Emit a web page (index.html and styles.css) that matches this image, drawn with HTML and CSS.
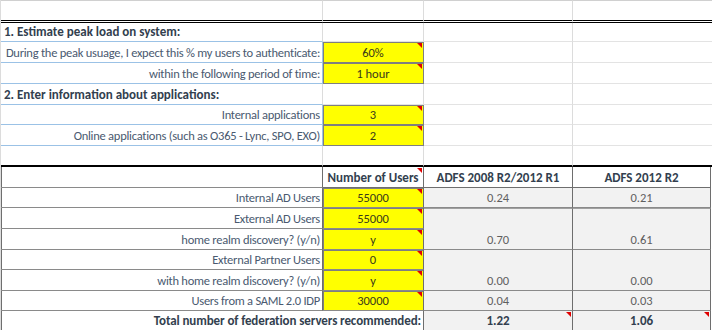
FILE: index.html
```html
<!DOCTYPE html>
<html lang="en">
<head>
  <meta charset="UTF-8">
  <title>ADFS Capacity Planning</title>
  <link rel="stylesheet" href="styles.css">
</head>
<body>
  <div class="sheet">
    <!-- row 0 -->
    <div class="c top dbl"></div>
    <div class="c top dbl"></div>
    <div class="c top dbl"></div>
    <div class="c top dbl"></div>

    <!-- section 1 -->
    <div class="c head blue-b">1. Estimate peak load on system:</div>
    <div class="c"></div>
    <div class="c"></div>
    <div class="c"></div>

    <div class="c lbl r blue">During the peak usuage, I expect this % my users to authenticate:</div>
    <div class="c in tri">60%</div>
    <div class="c"></div>
    <div class="c"></div>

    <div class="c lbl r blue">within the following period of time:</div>
    <div class="c in tri">1 hour</div>
    <div class="c"></div>
    <div class="c"></div>

    <!-- section 2 -->
    <div class="c head blue-b">2. Enter information about applications:</div>
    <div class="c"></div>
    <div class="c"></div>
    <div class="c"></div>

    <div class="c lbl r blue">Internal applications</div>
    <div class="c in tri">3</div>
    <div class="c"></div>
    <div class="c"></div>

    <div class="c lbl r blue">Online applications (such as O365 - Lync, SPO, EXO)</div>
    <div class="c in tri">2</div>
    <div class="c"></div>
    <div class="c"></div>

    <div class="c thick"></div>
    <div class="c thick"></div>
    <div class="c thick"></div>
    <div class="c thick"></div>

    <!-- results table -->
    <div class="c t first"></div>
    <div class="c t th tri">Number of Users</div>
    <div class="c t th">ADFS 2008 R2/2012 R1</div>
    <div class="c t th last">ADFS 2012 R2</div>

    <div class="c t first lbl r">Internal AD Users</div>
    <div class="c t in tri">55000</div>
    <div class="c t out">0.24</div>
    <div class="c t out last">0.21</div>

    <div class="c t first lbl r">External AD Users</div>
    <div class="c t in tri">55000</div>
    <div class="c t out span2 sep">0.70</div>
    <div class="c t out span2 sep last">0.61</div>

    <div class="c t first lbl r">home realm discovery? (y/n)</div>
    <div class="c t in tri">y</div>

    <div class="c t first lbl r">External Partner Users</div>
    <div class="c t in tri">0</div>
    <div class="c t out span2">0.00</div>
    <div class="c t out span2 last">0.00</div>

    <div class="c t first lbl r">with home realm discovery? (y/n)</div>
    <div class="c t in tri">y</div>

    <div class="c t first lbl r">Users from a SAML 2.0 IDP</div>
    <div class="c t in tri">30000</div>
    <div class="c t out">0.04</div>
    <div class="c t out last">0.03</div>

    <div class="c t first total r">Total number of federation servers recommended:</div>
    <div class="c t out bold tri">1.22</div>
    <div class="c t out bold tri last">1.06</div>
  </div>
</body>
</html>
```

FILE: styles.css
```css
body {
  margin: 0;
  background: #fff;
  font-family: Carlito, Calibri, Lato, sans-serif;
  font-size: 12.5px;
}
.sheet {
  display: grid;
  grid-template-columns: 322px 101px 149px 140px;
  grid-template-rows: 23px 19px 21px 21px 21px 20px 21px 21px 21px 20px 21px 21px 20px 21px 20px 20px;
  width: 712px;
  border-left: 1px solid #dcdcdc;
  box-sizing: border-box;
}
.c {
  position: relative;
  box-sizing: border-box;
  display: flex;
  align-items: flex-end;
  padding: 0 2px 1px;
  line-height: 17px;
  letter-spacing: -0.25px;
  white-space: nowrap;
  overflow: hidden;
  border-right: 1px solid #dcdcdc;
  border-bottom: 1px solid #e3e3e3;
  color: #333;
}
.top {
  border-top: 1px solid #d0d0d0;
}
.dbl {
  border-bottom: 3px double #000;
}
.thick {
  border-bottom: 2px solid #000;
}
.head {
  font-weight: bold;
  font-size: 13px;
  letter-spacing: 0;
  color: #333f4f;
  padding-left: 3px;
}
.lbl {
  color: #4a5a70;
}
.r {
  justify-content: flex-end;
}
.blue {
  border-right-color: #9bc2e6;
  border-bottom-color: #9bc2e6;
}
.blue-b {
  border-bottom-color: #9bc2e6;
}
.in {
  background: #ffff00;
  justify-content: center;
  color: #3a3a1a;
  letter-spacing: 0;
  box-shadow: inset 1px 0 0 #7f7f7f, inset 0 1px 0 #7f7f7f;
  border-right-color: #7f7f7f;
  border-bottom-color: #7f7f7f;
}
.tri::after {
  content: "";
  position: absolute;
  top: 1px;
  right: 1px;
  border-top: 5px solid #e00000;
  border-left: 5px solid transparent;
}
.t {
  border-right-color: #6e6e6e;
  border-bottom-color: #8a8a8a;
}
.first {
  box-shadow: inset 1px 0 0 #6e6e6e;
}
.th {
  justify-content: center;
  font-weight: bold;
  font-size: 13px;
  letter-spacing: 0;
  color: #333f4f;
  border-bottom-color: #6e6e6e;
}
.last {
  margin-right: 2px;
}
.out {
  background: #f2f2f2;
  justify-content: center;
  color: #5f5f5f;
  letter-spacing: 0;
}
.span2 {
  grid-row: span 2;
}
.sep {
  border-top: 1px solid #a0a0a0;
}
.total {
  grid-column: span 2;
  font-weight: bold;
  font-size: 13px;
  letter-spacing: -0.1px;
  color: #333f4f;
}
.bold {
  font-weight: bold;
  font-size: 13px;
  color: #333f4f;
}
```
